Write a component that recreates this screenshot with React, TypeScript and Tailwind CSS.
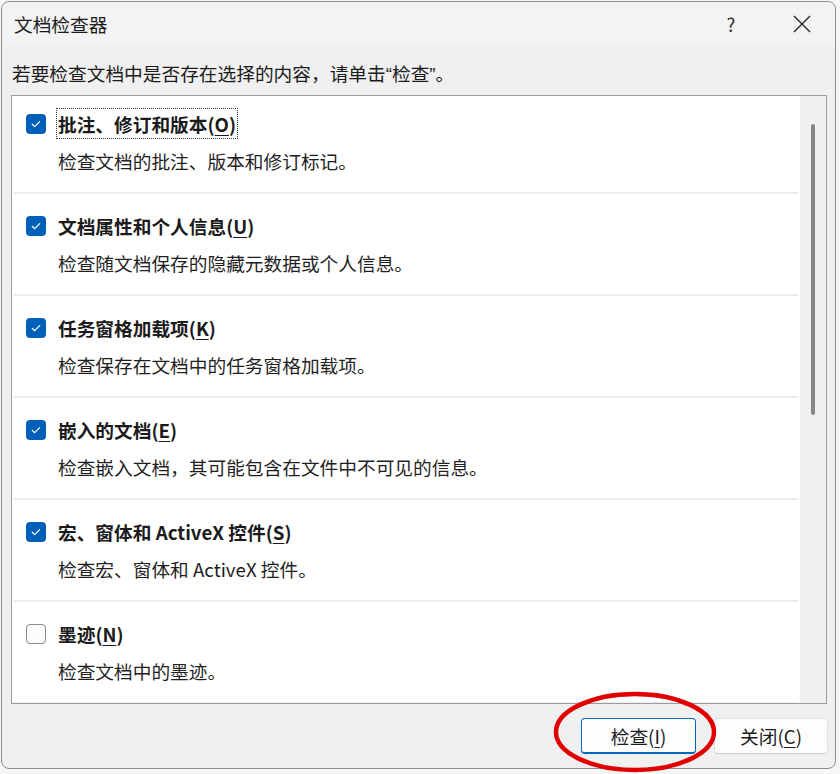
import { useState } from "react";

interface InspectItem {
  id: string;
  label: string;
  hotkey: string;
  desc: string;
}

const ITEMS: InspectItem[] = [
  { id: "comments", label: "批注、修订和版本", hotkey: "O", desc: "检查文档的批注、版本和修订标记。" },
  { id: "props", label: "文档属性和个人信息", hotkey: "U", desc: "检查随文档保存的隐藏元数据或个人信息。" },
  { id: "addins", label: "任务窗格加载项", hotkey: "K", desc: "检查保存在文档中的任务窗格加载项。" },
  { id: "embedded", label: "嵌入的文档", hotkey: "E", desc: "检查嵌入文档，其可能包含在文件中不可见的信息。" },
  { id: "macros", label: "宏、窗体和 ActiveX 控件", hotkey: "S", desc: "检查宏、窗体和 ActiveX 控件。" },
  { id: "ink", label: "墨迹", hotkey: "N", desc: "检查文档中的墨迹。" },
];

function CheckBox({ checked, onToggle }: { checked: boolean; onToggle: () => void }) {
  return (
    <button
      onClick={onToggle}
      className={
        checked
          ? "w-[20px] h-[20px] shrink-0 rounded-[4px] bg-[#005fb8] flex items-center justify-center"
          : "w-[20px] h-[20px] shrink-0 rounded-[4px] bg-[#fbfbfb] border border-[#8a8a8a]"
      }
    >
      {checked && (
        <svg width="20" height="20" viewBox="0 0 20 20" fill="none">
          <path d="M6.2 10.3l2.5 2.4 5-5" stroke="#ffffff" strokeWidth="1.2" strokeLinecap="round" strokeLinejoin="round" />
        </svg>
      )}
    </button>
  );
}

export default function App() {
  const [checked, setChecked] = useState<Record<string, boolean>>({
    comments: true,
    props: true,
    addins: true,
    embedded: true,
    macros: true,
    ink: false,
  });

  const toggle = (id: string) => setChecked((prev) => ({ ...prev, [id]: !prev[id] }));

  return (
    <div className="relative w-[840px] h-[774px] bg-[#f6f6f6] pt-[1px] pl-[1px] font-['Microsoft_YaHei','Noto_Sans_CJK_SC',sans-serif] text-[#1b1b1b] overflow-hidden">
      {/* 对话框窗口 */}
      <div className="w-[835px] h-[768px] rounded-[8px] border border-[#8e8e8e] bg-[#f0f0f0] flex flex-col">
        {/* 标题栏 */}
        <div className="h-[44px] shrink-0 flex items-center pl-[12px] pr-[10px] bg-[#f3f3f3] rounded-t-[8px]">
          <span className="flex-1 text-[18.7px] leading-[24px]">文档检查器</span>
          <span className="w-[46px] text-center text-[18.7px] leading-[24px] text-[#333]">?</span>
          <span className="w-[25px]" />
          <span className="w-[46px] flex items-center justify-center">
            <svg width="18" height="18" viewBox="0 0 18 18" fill="none">
              <path d="M1 1l16 16M17 1L1 17" stroke="#222" strokeWidth="1.3" />
            </svg>
          </span>
        </div>

        <div className="h-[49px] shrink-0 pl-[10px] pt-[15px] text-[18.7px] leading-[24px]">
          若要检查文档中是否存在选择的内容，请单击<span className="font-['Liberation_Sans']">“</span>检查<span className="font-['Liberation_Sans']">”</span>。
        </div>

        {/* 检查项列表 */}
        <div className="ml-[9px] w-[816px] h-[609px] shrink-0 border border-[#9c9c9c] bg-white flex">
          <div className="flex-1 overflow-hidden px-[2px]">
            <div className="-mt-[4px]">
              {ITEMS.map((item, i) => (
                <div key={item.id} className="h-[102px] border-b-2 border-[#ececec] pl-[12px]">
                  <div className="pt-[16px] h-[47px] flex items-center">
                    <CheckBox checked={checked[item.id]} onToggle={() => toggle(item.id)} />
                    <span
                      className={
                        i === 0
                          ? "ml-[10px] h-[31px] px-[1px] leading-[29px] text-[18.7px] font-bold border border-dotted border-[#333]"
                          : "ml-[10px] h-[31px] px-[1px] leading-[29px] text-[18.7px] font-bold border border-transparent"
                      }
                    >
                      {item.label}(<u className="underline-offset-[3px]">{item.hotkey}</u>)
                    </span>
                  </div>
                  <div className="mt-[10px] ml-[32px] text-[18.7px] leading-[24px] text-[#1f1f1f]">{item.desc}</div>
                </div>
              ))}
            </div>
          </div>
          {/* 滚动条 */}
          <div className="w-[26px] bg-[#f0f0f0] pt-[28px] pl-[11px]">
            <div className="w-[4px] h-[291px] rounded-full bg-[#878787]" />
          </div>
        </div>

        {/* 底部按钮 */}
        <div className="flex justify-end gap-[18px] pt-[14px] pr-[7px]">
          <button className="w-[115px] h-[36px] rounded-[4px] bg-[#fdfdfd] border border-[#0067c0] border-b-2 text-[18.7px] leading-[24px]">
            检查(<u className="underline-offset-[3px]">I</u>)
          </button>
          <button className="w-[114px] h-[36px] rounded-[4px] bg-[#fdfdfd] border border-[#e0e0e0] border-b-[#cccccc] text-[18.7px] leading-[24px]">
            关闭(<u className="underline-offset-[3px]">C</u>)
          </button>
        </div>
      </div>

      {/* 红色圈注 */}
      <svg className="absolute left-[553px] top-[691px] pointer-events-none" width="166" height="84" viewBox="0 0 166 84" fill="none">
        <ellipse cx="82" cy="41" rx="79" ry="38" stroke="#e00000" strokeWidth="4.5" />
      </svg>
    </div>
  );
}
